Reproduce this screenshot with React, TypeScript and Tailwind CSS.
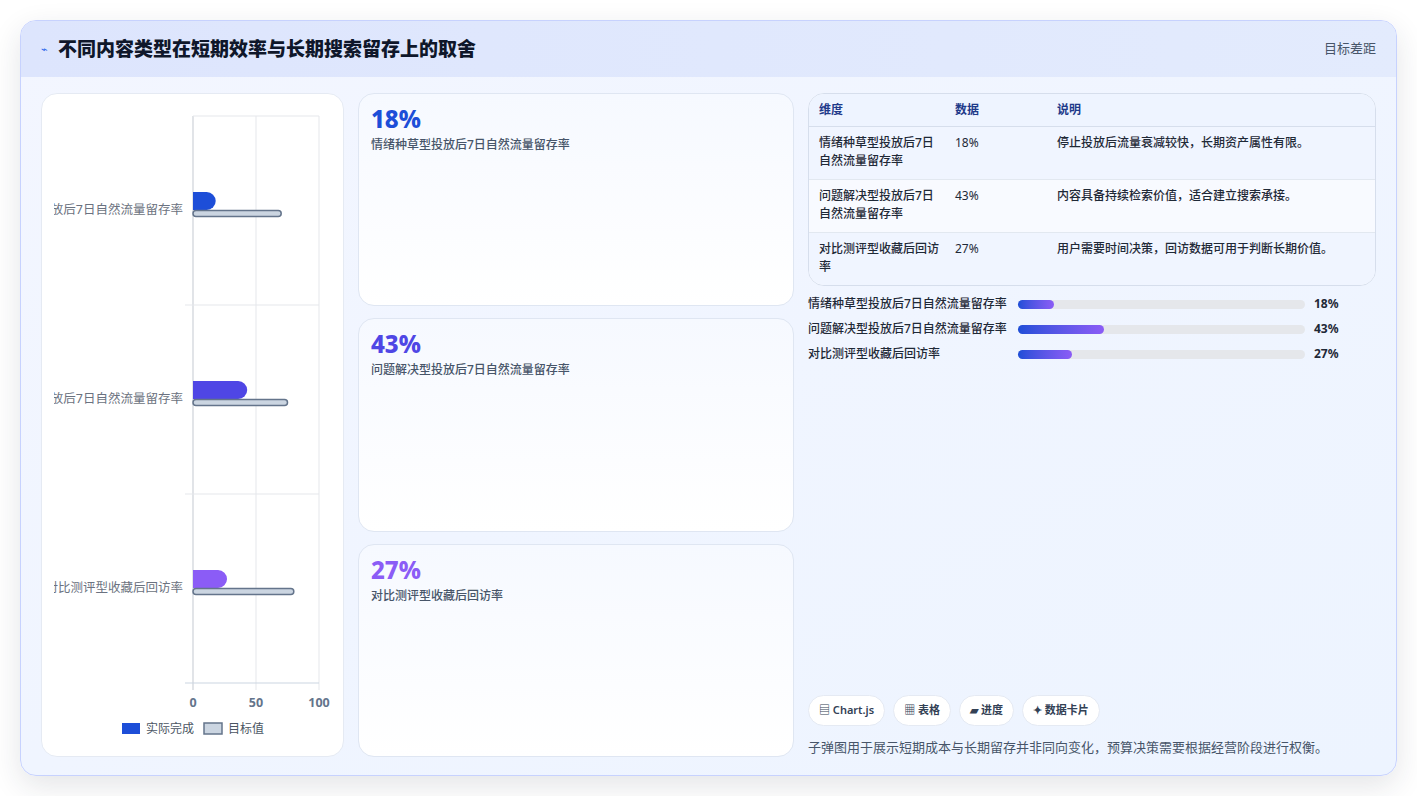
import React from "react";

const rows = [
  { name: "情绪种草型投放后7日自然流量留存率", v: 18, target: 70, color: "#1d4ed8", note: "停止投放后流量衰减较快，长期资产属性有限。" },
  { name: "问题解决型投放后7日自然流量留存率", v: 43, target: 75, color: "#4f46e5", note: "内容具备持续检索价值，适合建立搜索承接。" },
  { name: "对比测评型收藏后回访率", v: 27, target: 80, color: "#8b5cf6", note: "用户需要时间决策，回访数据可用于判断长期价值。" },
];

function Chart() {
  const x0 = 151;
  const s = 1.26;
  const centers = [116, 305, 494];
  return (
    <svg width="303" height="664" viewBox="0 0 303 664" className="block">
      <defs>
        <clipPath id="lbl">
          <rect x="12" y="0" width="140" height="664" />
        </clipPath>
      </defs>
      {[0, 50, 100].map((t) => (
        <line key={t} x1={x0 + t * s} x2={x0 + t * s} y1="22" y2="596" stroke="#e5e7eb" />
      ))}
      <line x1={x0} x2={x0} y1="22" y2="596" stroke="#d1d5db" />
      <line x1={x0} x2={x0 + 126} y1="22" y2="22" stroke="#e5e7eb" />
      <line x1="143" x2={x0 + 126} y1="211" y2="211" stroke="#e5e7eb" />
      <line x1="143" x2={x0 + 126} y1="400" y2="400" stroke="#e5e7eb" />
      <line x1="143" x2={x0 + 126} y1="589" y2="589" stroke="#cbd5e1" />
      {rows.map((r, i) => {
        const c = centers[i];
        const w = r.v * s;
        return (
          <g key={i}>
            <path
              d={`M${x0} ${c - 18} H${x0 + w - 9} A9 9 0 0 1 ${x0 + w} ${c - 9} A9 9 0 0 1 ${x0 + w - 9} ${c} H${x0} Z`}
              fill={r.color}
            />
            <rect x={x0} y={c + 0.5} width={r.target * s} height="6" rx="3" fill="#cbd5e1" stroke="#64748b" strokeWidth="1.5" />
            <text x="141" y={c + 4} textAnchor="end" fontSize="12.5" fill="#6b7280" clipPath="url(#lbl)">
              {r.name}
            </text>
          </g>
        );
      })}
      {[0, 50, 100].map((t) => (
        <text key={t} x={x0 + t * s} y="613" textAnchor="middle" fontSize="12.5" fontWeight="700" fill="#64748b">
          {t}
        </text>
      ))}
      <rect x="80" y="629" width="18" height="11" fill="#1d4ed8" />
      <text x="104" y="639" fontSize="12" fill="#4b5563">实际完成</text>
      <rect x="162" y="629" width="18" height="11" fill="#cbd5e1" stroke="#64748b" strokeWidth="1.5" />
      <text x="186" y="639" fontSize="12" fill="#4b5563">目标值</text>
    </svg>
  );
}

export default function App() {
  return (
    <div className="min-h-screen bg-white p-5" style={{ fontFamily: '"Noto Sans", "Noto Sans CJK SC", sans-serif' }}>
      <div className="h-[756px] overflow-hidden rounded-2xl border border-[#c7d2fe] bg-gradient-to-br from-[#f3f6ff] to-[#edf4ff] shadow-[0_10px_30px_rgba(30,41,59,0.12)] flex flex-col">
        <div className="flex h-[56px] shrink-0 items-center justify-between bg-gradient-to-r from-[#dde5fd] to-[#e3ebfd] px-5">
          <div className="flex items-center gap-2.5">
            <span className="text-[11px] text-[#2563eb]">⌁</span>
            <h1 className="text-[19px] font-extrabold text-[#0f172a]">不同内容类型在短期效率与长期搜索留存上的取舍</h1>
          </div>
          <span className="text-[13px] text-[#475569]">目标差距</span>
        </div>
        <div className="flex min-h-0 flex-1 gap-[14px] px-5 pt-[16px] pb-[18px]">
          <div className="w-[303px] shrink-0 overflow-hidden rounded-2xl border border-[#e5eaf3] bg-white">
            <Chart />
          </div>
          <div className="flex w-[436px] shrink-0 flex-col gap-3">
            {rows.map((r) => (
              <div key={r.v} className="flex-1 rounded-2xl border border-[#dfe6f2] bg-gradient-to-b from-[#f6f9ff] to-white px-[12px] pt-[10px]">
                <div className="text-[24px] font-extrabold leading-[30px]" style={{ color: r.color }}>
                  {r.v}%
                </div>
                <div className="mt-0.5 text-[12px] font-medium text-[#475569]">{r.name}</div>
              </div>
            ))}
          </div>
          <div className="flex flex-1 flex-col">
            <div className="overflow-hidden rounded-2xl border border-[#d6deec] bg-white text-[12px]">
              <div className="flex h-[33px] items-center border-b border-[#d6deec] bg-[#eef4ff] px-[10px] font-semibold text-[#1e3a8a]">
                <div className="w-[136px]">维度</div>
                <div className="w-[102px]">数据</div>
                <div>说明</div>
              </div>
              {rows.map((r, i) => (
                <div key={i} className={`flex px-[10px] pt-[7px] pb-[9px] leading-[18px] text-[#1f2937] ${i < 2 ? "border-b border-[#e2e8f0]" : ""} ${i === 1 ? "bg-[#f8faff]" : "bg-[#f0f5ff]"}`}>
                  <div className="w-[136px] pr-3 font-medium">{r.name}</div>
                  <div className="w-[102px]">{r.v}%</div>
                  <div className="flex-1 font-medium">{r.note}</div>
                </div>
              ))}
            </div>
            <div className="mt-[9px] flex flex-col gap-[7px]">
              {rows.map((r, i) => (
                <div key={i} className="flex h-[18px] items-center text-[12px] font-medium text-[#1f2937]">
                  <div className="w-[210px]">{r.name}</div>
                  <div className="h-[9px] w-[287px] rounded-full bg-[#e5e7eb]">
                    <div className="h-full rounded-full bg-gradient-to-r from-[#1d4ed8] to-[#8b5cf6]" style={{ width: `${r.v * 0.7}%` }} />
                  </div>
                  <div className="ml-[9px] font-bold">{r.v}%</div>
                </div>
              ))}
            </div>
            <div className="flex-1" />
            <div className="flex gap-2 text-[11px] font-semibold text-[#334155]">
              {["▤ Chart.js", "▦ 表格", "▰ 进度", "✦ 数据卡片"].map((c) => (
                <span key={c} className="rounded-full border border-[#e5eaf3] bg-white px-[10px] py-[6px]">{c}</span>
              ))}
            </div>
            <p className="mt-[12px] text-[13px] text-[#475569]">子弹图用于展示短期成本与长期留存并非同向变化，预算决策需要根据经营阶段进行权衡。</p>
          </div>
        </div>
      </div>
    </div>
  );
}
